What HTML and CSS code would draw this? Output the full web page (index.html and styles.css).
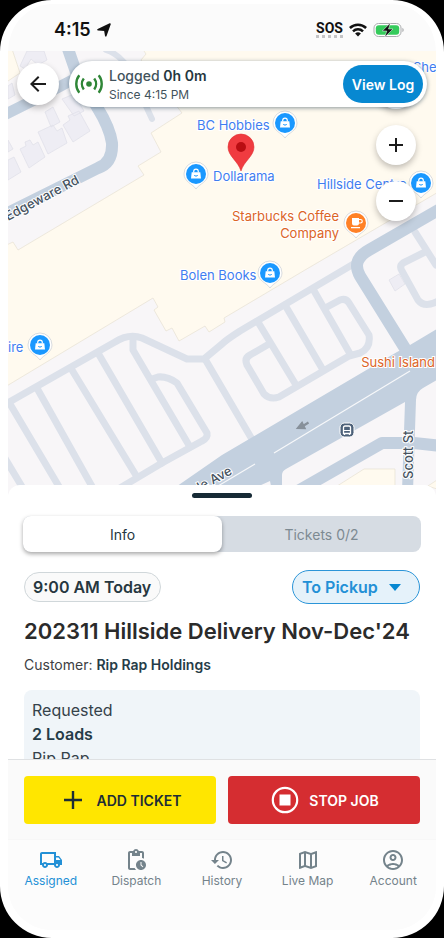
FILE: index.html
```html
<!DOCTYPE html>
<html lang="en">
<head>
<meta charset="utf-8">
<meta name="viewport" content="width=device-width, initial-scale=1">
<title>202311 Hillside Delivery</title>
<link rel="stylesheet" href="styles.css">
</head>
<body>
<div class="phone">
  <header class="status">
    <div class="status-left">
      <span class="time">4:15</span>
      <svg width="14" height="14" viewBox="0 0 14 14" aria-hidden="true"><path d="M13 1 8.800 12.800 7.800 7.200 1 6.700z" fill="#111" stroke="#111" stroke-width="1.600" stroke-linejoin="round"/></svg>
    </div>
    <div class="status-right">
      <span class="sos">SOS</span>
      <svg width="18" height="14" viewBox="0 0 18 14" fill="none" stroke="#111" stroke-width="2.5" aria-hidden="true"><path d="M.9 5a11.6 11.6 0 0 1 16.2 0M4 8.3a7.2 7.2 0 0 1 10 0"/><path d="M9 13.5 6.1 10.6a4.2 4.2 0 0 1 5.8 0z" fill="#111" stroke="none"/></svg>
      <svg width="32" height="16" viewBox="0 0 32 16" aria-hidden="true"><rect x="1" y="1.500" width="27" height="13" rx="4.500" fill="#fff" stroke="#a9abad"/><rect x="2.800" y="3.200" width="23.400" height="9.600" rx="3" fill="#35cb5b"/><path d="M29.400 5.800v4.400c1.800-.7 1.800-3.700 0-4.400z" fill="#a9abad"/><path d="M17.500.8 9.300 9h4.500L11.700 15.200l8.300-8.200h-4.500z" fill="#111" stroke="#fff" stroke-width=".5"/></svg>
    </div>
  </header>

  <main class="map">
    <svg class="map-canvas" viewBox="8 51 428 446" preserveAspectRatio="xMidYMid slice" role="img" aria-label="Map of Hillside Centre">
      <defs>
        <g id="pin"><path d="M0 15C-3 10-12 8-12 0a12 12 0 0 1 24 0C12 8 3 10 0 15z" fill="#fff" stroke="#c9cdd3" stroke-width=".7"/></g>
        <g id="shop"><use href="#pin"/><circle r="10" fill="#1a98ff"/><path d="M-4.300-1.800h8.600l.7 6.300h-10z" fill="#fff"/><path d="M-2.300-1.500v-1a2.300 2.300 0 0 1 4.600 0v1" fill="none" stroke="#fff" stroke-width="1.200"/><path d="M-1.800 1a1.900 1.600 0 0 0 3.600 0" fill="none" stroke="#1a98ff"/></g>
      </defs>
      <path fill="#f8f6f8" d="M0 0h460v520H0z"/>
      <g fill="#fffaef" stroke="#e6e1d3" stroke-width=".7">
        <path d="M144 51 146 54 141 60 182 113 151 133 161 152 138 166 144 175 18 250 13 242 0 248V390L153 298 158 307 154 310 166 331 172 328 179 341 205 326 209 332 225 322 224 318 305 270 440 191V40H140z"/>
        <path d="M0 40h9l11 33-12 8H0zM334 488 364 469H395V490zM428 486l12-8v12z"/>
      </g>
      <g fill="#eeedf4" stroke="#e1e1ea" stroke-width=".8">
        <path d="M45 112 53 107 60 122 51 127zM38 132 53 125 57 131 62 128 67 143 48 154zM63 125 70 120 68 116 79 111 90 131 73 142zM20 149 26 146 25 142 30 140 33 145 38 142 45 157 29 168zM8 160l6-3 7 15-13 8zM8 140l5 9-5 3zM27 51h17l3 9-9 5-7-6-6 10-5-3zM8 86l4-3 3 12-7 4zM62 99l12-5 10 17-10 5zM389 280 399 274 405 284 395 291z"/>
      </g>
      <g fill="none" stroke="#dce1ea" stroke-width="7" stroke-linejoin="round" stroke-linecap="round">
        <path d="M106 50Q124 56 133 77T152 119" stroke-width="6"/>
        <path d="M4 405 115 342Q129 333 142 338L187 359H204L222 344Q226 340 240 331L362 259"/>
        <path d="M98 353 162 463M72 370 137 477M38 390 94 490M10 404 61 490M3 455 24 490M133 339V350L190 447M205 359 253 441"/>
        <path d="M120 488 162 463 202 441Q208 438 207 433L177 383Q167 376 158 377L152 379"/>
        <path d="M258 322 296 385M285 305 323 370M313 289 349 352M327 307 340 300Q346 298 349 303L369 335Q371 348 360 353L349 356 279 397Q270 400 264 394L247 365Q244 358 250 355L269 344"/>
        <path d="M415 232 436 265M425 252 403 263Q399 266 402 271L418 300Q425 309 440 300"/>
      </g>
      <g fill="none" stroke="#c3d0df" stroke-linejoin="round">
        <path d="M67 46 76 72 97 107Q110 128 112 143 113 163 98 168L4 215" stroke-width="12"/>
        <path d="M4 115 40 97 76 78" stroke-width="11"/>
        <path d="M442 208 369 250Q351 260 360 276L406 350" stroke-width="12"/>
        <path d="M442 446 414 443H382L298 491" stroke-width="12"/>
      </g>
      <path fill="#c3d0df" d="M170 491 222 455 397 352 410 345 442 326V377L423 388Q416 392 416 400L413 491H402L405 402 286 469Q282 471 282 475V491H272L270 481 248 491z"/>
      <path d="M274 453 410 371M218 486 255 464" stroke="#f7f8fa" stroke-width="1.200"/>
      <path d="M308.500 422.500 303 426M298 428l4-5 2.500 5.200z" stroke="#87909a" stroke-width="2.200" fill="#87909a"/>
      <g class="road-label">
        <text transform="translate(8 221) rotate(-28)">Edgeware Rd</text>
        <text transform="translate(187 499) rotate(-29)">side Ave</text>
        <text transform="translate(413 479) rotate(-90)">Scott St</text>
      </g>
      <g class="place-label">
        <text x="197" y="130">BC Hobbies</text>
        <text x="213" y="181">Dollarama</text>
        <text x="317" y="189">Hillside Centre</text>
        <text x="180" y="280">Bolen Books</text>
        <text x="8" y="352">ire</text>
        <text x="413" y="72">She</text>
      </g>
      <g class="place-label place-food">
        <text x="339" y="221" text-anchor="end">Starbucks Coffee</text>
        <text x="339" y="238" text-anchor="end">Company</text>
        <text x="435" y="367" text-anchor="end">Sushi Island</text>
      </g>
      <use href="#shop" x="285" y="123"/><use href="#shop" x="196" y="174"/><use href="#shop" x="421" y="183"/><use href="#shop" x="270" y="273"/><use href="#shop" x="40" y="345"/>
      <g transform="translate(356 223)"><use href="#pin"/><circle r="10" fill="#ff8126"/><path d="M-4-5h7v5.500A2 2 0 0 1 1 2.500h-3a2 2 0 0 1-2-2zM-5 4h9v1.300h-9z" fill="#fff"/><path d="M3-3.500h1.500a1.500 1.500 0 0 1 0 3.500H3" fill="none" stroke="#fff" stroke-width="1.200"/></g>
      <g transform="translate(347 430)"><rect x="-7" y="-7" width="14" height="14" rx="4.500" fill="#4d6179" stroke="#fff"/><path d="M-3.500 3.500v-6q0-1.500 1.500-1.500h4q1.500 0 1.500 1.500v6zM-2.500 3.500V5M2.500 3.500V5" fill="none" stroke="#fff" stroke-width="1.300"/><path d="M-3 .5h6" stroke="#fff"/></g>
      <path d="M241 171C238 161 228 156 228 147a13 13 0 0 1 26 0C254 156 244 161 241 171z" fill="#f03b40" stroke="#df3034" stroke-width=".6"/><circle cx="241" cy="147" r="5" fill="#b90d12"/>
    </svg>

    <div class="map-top">
      <button class="round back" type="button" aria-label="Back"><svg width="24" height="24" viewBox="0 0 24 24"><path d="M20 11H7.830l5.590-5.590L12 4l-8 8 8 8 1.410-1.410L7.830 13H20z"/></svg></button>
      <section class="log">
        <svg class="log-icon" width="28" height="24" viewBox="0 0 28 24" fill="none" stroke="#2f8637" stroke-width="2.400" aria-hidden="true"><circle cx="14" cy="12" r="2.800" fill="#2f8637" stroke="none"/><path d="M8.800 6.500a9 9 0 0 0 0 11M19.200 6.500a9 9 0 0 1 0 11M4.300 3.300a14 14 0 0 0 0 17.400M23.700 3.300a14 14 0 0 1 0 17.400"/></svg>
        <div class="log-text">
          <p class="log-main">Logged <b>0h 0m</b></p>
          <p class="log-sub">Since 4:15 PM</p>
        </div>
        <button class="view-log" type="button">View Log</button>
      </section>
    </div>
    <div class="zoom">
      <button class="round" type="button" aria-label="Map layers"></button>
      <button class="round" type="button" aria-label="Zoom in"><svg width="24" height="24" viewBox="0 0 24 24"><path d="M19 13h-6v6h-2v-6H5v-2h6V5h2v6h6z"/></svg></button>
      <button class="round" type="button" aria-label="Zoom out"><svg width="24" height="24" viewBox="0 0 24 24"><path d="M5 11h14v2H5z"/></svg></button>
    </div>
  </main>

  <section class="sheet">
    <div class="handle"></div>
    <div class="tabs">
      <button class="tab active" type="button">Info</button>
      <button class="tab" type="button">Tickets 0/2</button>
    </div>
    <div class="meta">
      <span class="date">9:00 AM Today</span>
      <div class="stage">
        <select aria-label="Job stage"><option>To Pickup</option></select>
        <svg width="12" height="7" viewBox="0 0 12 7" aria-hidden="true"><path d="M0 0h12L6 7z" fill="#0788d1"/></svg>
      </div>
    </div>
    <h1>202311 Hillside Delivery Nov-Dec'24</h1>
    <p class="customer">Customer: <b>Rip Rap Holdings</b></p>
    <div class="request">
      <p>Requested</p>
      <p><b>2 Loads</b></p>
      <p>Rip Rap</p>
    </div>
  </section>

  <div class="actions">
    <button class="action add" type="button">
      <svg width="20" height="20" viewBox="0 0 20 20" aria-hidden="true"><path d="M10 1v18M1 10h18" stroke="#1d2d36" stroke-width="2.400"/></svg>
      ADD TICKET
    </button>
    <button class="action stop" type="button">
      <svg width="28" height="28" viewBox="0 0 28 28" aria-hidden="true"><circle cx="14" cy="14" r="12.200" fill="none" stroke="#fff" stroke-width="2.200"/><path d="M8.500 8.500h11v11h-11z" fill="#fff"/></svg>
      STOP JOB
    </button>
  </div>

  <nav class="nav">
    <a class="current" href="#assigned"><svg viewBox="0 0 24 24"><path d="M20 8h-3V4H3c-1.100 0-2 .9-2 2v11h2c0 1.660 1.340 3 3 3s3-1.340 3-3h6c0 1.660 1.340 3 3 3s3-1.340 3-3h2v-5l-3-4zm-.5 1.500l1.960 2.500H17V9.500h2.500zM6 18c-.55 0-1-.45-1-1s.45-1 1-1 1 .45 1 1-.45 1-1 1zm2.220-3c-.55-.61-1.330-1-2.220-1s-1.670.39-2.220 1H3V6h12v9H8.220zM18 18c-.55 0-1-.45-1-1s.45-1 1-1 1 .45 1 1-.45 1-1 1z"/></svg>Assigned</a>
    <a href="#dispatch"><svg viewBox="0 0 24 24"><path d="M17 12c-2.760 0-5 2.240-5 5s2.240 5 5 5 5-2.240 5-5-2.240-5-5-5zm1.650 7.350L16.500 17.200V14h1v2.790l1.850 1.850-.7.71zM18 3h-3.180C14.400 1.840 13.300 1 12 1s-2.400.84-2.820 2H6c-1.100 0-2 .9-2 2v15c0 1.100.9 2 2 2h6.110c-.59-.57-1.070-1.250-1.420-2H6V5h2v3h8V5h2v5.080c.71.1 1.380.31 2 .6V5c0-1.100-.9-2-2-2zm-6 2c-.55 0-1-.45-1-1s.45-1 1-1 1 .45 1 1-.45 1-1 1z"/></svg>Dispatch</a>
    <a href="#history"><svg viewBox="0 0 24 24"><path d="M13 3c-4.970 0-9 4.030-9 9H1l3.890 3.890.07.14L9 12H6c0-3.870 3.130-7 7-7s7 3.130 7 7-3.130 7-7 7c-1.930 0-3.680-.79-4.940-2.060l-1.420 1.420C8.270 19.990 10.510 21 13 21c4.970 0 9-4.030 9-9s-4.030-9-9-9zm-1 5v5l4.280 2.540.72-1.210-3.500-2.080V8H12z"/></svg>History</a>
    <a href="#map"><svg viewBox="0 0 24 24"><path d="M20.500 3l-.16.03L15 5.100 9 3 3.360 4.900c-.21.07-.36.25-.36.48V20.500c0 .28.22.5.5.5l.16-.03L9 18.900l6 2.100 5.640-1.900c.21-.07.36-.25.36-.48V3.500c0-.28-.22-.5-.5-.5zM10 5.470l4 1.400v11.660l-4-1.400V5.470zm-5 .99l3-1.010v11.700l-3 1.160V6.460zm14 11.080l-3 1.010V6.860l3-1.160v11.840z"/></svg>Live Map</a>
    <a href="#account"><svg viewBox="0 0 24 24"><path d="M12 2C6.480 2 2 6.480 2 12s4.480 10 10 10 10-4.480 10-10S17.520 2 12 2zM7.350 18.500C8.660 17.560 10.260 17 12 17s3.340.56 4.650 1.500C15.340 19.440 13.740 20 12 20s-3.340-.56-4.650-1.500zm10.790-1.380C16.450 15.800 14.320 15 12 15s-4.450.8-6.140 2.120C4.700 15.730 4 13.950 4 12c0-4.420 3.580-8 8-8s8 3.580 8 8c0 1.950-.7 3.730-1.860 5.120zM12 6c-1.930 0-3.500 1.570-3.500 3.500S10.070 13 12 13s3.500-1.570 3.500-3.500S13.930 6 12 6zm0 5c-.83 0-1.500-.67-1.500-1.500S11.170 8 12 8s1.500.67 1.500 1.500S12.830 11 12 11z"/></svg>Account</a>
  </nav>
</div>
</body>
</html>
```
FILE: styles.css
```css
* {
  box-sizing: border-box;
}

body {
  margin: 0;
  background: #000;
  color: #263740;
  font-family: Inter, "Liberation Sans", sans-serif;
}

p,
h1 {
  margin: 0;
}

button,
select {
  border: 0;
  padding: 0;
  font-family: inherit;
  color: inherit;
  cursor: pointer;
}

b {
  font-weight: 600;
}

.phone {
  display: flex;
  flex-direction: column;
  height: 100vh;
  overflow: hidden;
  border: 8px solid #fff;
  border-top-width: 4px;
  border-radius: 52px;
  background: #fbfbfb;
}

/* Status bar */
.status {
  display: flex;
  justify-content: space-between;
  align-items: center;
  flex: none;
  height: 47px;
  padding: 4px 31px 0 46px;
  color: #111;
}

.status-left,
.status-right {
  display: flex;
  align-items: center;
  gap: 6px;
}

.time {
  font-size: 18px;
  font-weight: 600;
}

.sos {
  font: 700 14px/14px "Liberation Sans Narrow", Roboto, sans-serif;
  border-bottom: 3px dotted #c4c4c6;
}

/* Map */
.map {
  position: relative;
  flex: 1 1 0;
  min-height: 0;
  margin-bottom: -12px;
}

.map-canvas {
  display: block;
  width: 100%;
  height: 100%;
}

.road-label {
  font: 500 13px Inter, sans-serif;
  fill: #46535f;
  stroke: #fff;
  stroke-width: 2px;
  paint-order: stroke;
}

.place-label {
  font: 400 13px Inter, sans-serif;
  fill: #3f7df0;
  stroke: #fff;
  stroke-width: 2px;
  paint-order: stroke;
}

.place-food {
  fill: #dc6427;
}

.map-top {
  position: absolute;
  z-index: 1;
  top: 10px;
  left: 9px;
  right: 9px;
  display: flex;
  align-items: center;
  gap: 10px;
}

.round {
  display: grid;
  place-items: center;
  width: 40px;
  height: 40px;
  border-radius: 50%;
  background: #fff;
  box-shadow: 0 3px 6px rgba(0, 0, 0, 0.25);
  fill: #1c1c1c;
}

.back {
  flex: none;
  width: 42px;
  height: 42px;
}

.log {
  display: flex;
  align-items: center;
  flex: 1;
  height: 46px;
  padding: 0 4px 0 6px;
  border-radius: 23px;
  background: #fff;
  box-shadow: 0 1px 4px rgba(20, 50, 70, 0.5);
}

.log-text {
  flex: 1;
  margin-left: 6px;
  padding-top: 2px;
  color: #42535c;
}

.log-main {
  font-size: 14px;
  line-height: 20px;
  font-weight: 500;
}

.log-main b {
  color: #263740;
}

.log-sub {
  font-size: 12px;
  line-height: 18px;
}

.view-log {
  width: 80px;
  height: 38px;
  border-radius: 19px;
  background: #0788d1;
  color: #fff;
  font-size: 14px;
  font-weight: 600;
}

.zoom {
  position: absolute;
  top: 18px;
  right: 20px;
  display: grid;
  gap: 16px;
}

/* Job sheet */
.sheet {
  position: relative;
  flex: 0 0 274px;
  overflow: hidden;
  padding: 8px 16px 0;
  border-radius: 12px 12px 0 0;
  background: #fff;
}

.handle {
  width: 60px;
  height: 5px;
  margin: 0 auto 18px;
  border-radius: 3px;
  background: #162a35;
}

.tabs {
  display: grid;
  grid-template-columns: 1fr 1fr;
  margin: 0 -1px 18px;
  border-radius: 8px;
  background: #d6dce3;
}

.tab {
  height: 36px;
  border-radius: 8px;
  background: none;
  color: #7d8a92;
  font-size: 14px;
}

.tab.active {
  background: #fff;
  box-shadow: 0 2px 4px rgba(0, 0, 0, 0.35);
  color: #263740;
}

.meta {
  display: flex;
  justify-content: space-between;
  align-items: center;
  margin-bottom: 12px;
}

.date {
  padding: 0 9px 0 8px;
  border: 1px solid #d0d7da;
  border-radius: 15px;
  background: #fafafa;
  font-size: 16px;
  line-height: 28px;
  font-weight: 600;
}

.stage {
  position: relative;
  display: flex;
}

.stage select {
  appearance: none;
  height: 34px;
  padding: 0 41px 0 9px;
  border: 1px solid #2b95d8;
  border-radius: 17px;
  background: #e5f2fa;
  color: #2390d6;
  font-size: 16px;
  font-weight: 600;
}

.stage svg {
  position: absolute;
  top: 14px;
  right: 19px;
  pointer-events: none;
}

h1 {
  margin-bottom: 9px;
  color: #2b2b2b;
  font-size: 22px;
  line-height: 30px;
  font-weight: 600;
  white-space: nowrap;
}

.customer {
  margin-bottom: 15px;
  color: #3c4043;
  font-size: 14px;
  line-height: 20px;
}

.customer b {
  color: #263c48;
}

.request {
  padding: 8px;
  border-radius: 8px;
  background: #f0f5f9;
  color: #35424a;
  font-size: 16px;
  line-height: 24px;
}

.request b {
  color: #263c48;
}

/* Footer */
.actions {
  position: relative;
  display: grid;
  grid-template-columns: 1fr 1fr;
  flex: none;
  gap: 12px;
  padding: 16px 16px 15px;
  border-top: 1px solid #dfe1e3;
  background: #fafafa;
}

.action {
  display: flex;
  justify-content: center;
  align-items: center;
  gap: 10px;
  height: 48px;
  border-radius: 4px;
  font-size: 14px;
  font-weight: 600;
}

.add {
  gap: 14px;
  padding-left: 4px;
  background: #ffe600;
  color: #1d2d36;
}

.stop {
  padding-left: 2px;
  background: #d52d31;
  color: #fff;
}

.nav {
  display: grid;
  grid-template-columns: repeat(5, 1fr);
  flex: none;
  height: 91px;
  padding-top: 8px;
  border-top: 1px solid #f7f7f7;
  background: #fcfcfc;
}

.nav a {
  display: flex;
  flex-direction: column;
  align-items: center;
  gap: 1px;
  color: #74838b;
  fill: #74838b;
  font-size: 12px;
  line-height: 16px;
  text-decoration: none;
}

.nav svg {
  width: 24px;
  height: 24px;
}

.nav .current {
  color: #2390d6;
  fill: #2390d6;
}
```
